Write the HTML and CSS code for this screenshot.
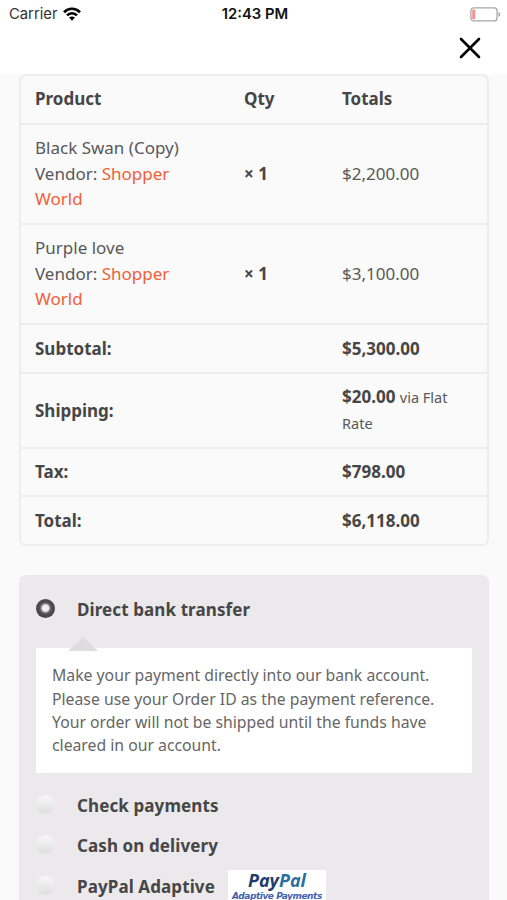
FILE: index.html
```html
<!DOCTYPE html>
<html lang="en">
<head>
<meta charset="utf-8">
<title>Checkout</title>
<link rel="stylesheet" href="styles.css">
</head>
<body>
<header class="top">
  <div class="status">
    <div class="carrier"><span>Carrier</span>
      <svg class="wifi" width="18" height="14" viewBox="0 0 18 14" fill="none" stroke="#000" stroke-width="2.7"><path d="M1 5.2C5.4.6 12.6.6 17 5.2"/><path d="M4 8.4c2.9-2.9 7.1-2.9 10 0"/><path d="M6.1 10.6c1.7-1.5 4.1-1.5 5.8 0L9 13.7z" fill="#000" stroke="none"/></svg>
    </div>
    <div class="clock">12:43 PM</div>
    <svg class="battery" width="31" height="15" viewBox="0 0 31 15"><rect x=".9" y=".9" width="26.2" height="13" rx="3" fill="#fff" stroke="#a8a8a8" stroke-width="1.3"/><rect x="2.2" y="2.6" width="3" height="9.6" rx="1" fill="#f58f91"/><path d="M28.5 5c2.4.8 2.4 4 0 4.8z" fill="#a8a8a8"/></svg>
  </div>
  <svg class="close" width="22" height="22" viewBox="0 0 22 22" stroke="#000" stroke-width="2.6" stroke-linecap="round"><path d="M2 2l18 18M20 2L2 20"/></svg>
</header>
<main>
  <section class="order">
    <div class="row head"><b>Product</b><b>Qty</b><b>Totals</b></div>
    <div class="row item"><div><div>Black Swan (Copy)</div><div>Vendor: <a>Shopper</a></div><div><a>World</a></div></div><b>× 1</b><span>$2,200.00</span></div>
    <div class="row item"><div><div>Purple love</div><div>Vendor: <a>Shopper</a></div><div><a>World</a></div></div><b>× 1</b><span>$3,100.00</span></div>
    <div class="row"><b>Subtotal:</b><b class="total">$5,300.00</b></div>
    <div class="row shipping"><b>Shipping:</b><div class="total"><div><b>$20.00</b> <small>via Flat</small></div><div><small>Rate</small></div></div></div>
    <div class="row tax"><b>Tax:</b><b class="total">$798.00</b></div>
    <div class="row last"><b>Total:</b><b class="total">$6,118.00</b></div>
  </section>
  <section class="payment">
    <div class="method first"><i class="radio on"></i><b>Direct bank transfer</b></div>
    <p class="note">Make your payment directly into our bank account. Please use your Order ID as the payment reference. Your order will not be shipped until the funds have cleared in our account.</p>
    <div class="method"><i class="radio"></i><b>Check payments</b></div>
    <div class="method"><i class="radio"></i><b>Cash on delivery</b></div>
    <div class="method"><i class="radio"></i><b>PayPal Adaptive</b>
      <div class="paypal"><div class="brand"><span>Pay</span><span class="pal">Pal</span></div><div class="sub">Adaptive Payments</div></div>
    </div>
  </section>
</main>
</body>
</html>
```
FILE: styles.css
```css
* { box-sizing: border-box; }
body { margin: 0; height: 900px; overflow: hidden; background: #fafafa; color: #585858; font: 17px/25.7px "Noto Sans", "Open Sans", sans-serif; }
b { color: #464646; font-weight: 700; }
a { color: #ee6139; }
.top { height: 74px; background: #fff; display: flex; flex-direction: column; }
.status { height: 27px; padding: 0 6px 0 9px; display: grid; grid-template-columns: 1fr auto 1fr; align-items: center; color: #333; font: 14.8px/27px Inter, sans-serif; }
.carrier { display: flex; align-items: center; gap: 5px; padding-top: 1px; }
.wifi { position: relative; top: -1px; }
.clock { font-weight: 600; color: #111; padding-top: 1px; }
.battery { justify-self: end; }
.close { align-self: flex-end; margin: 10px 26px 0 0; }
main { padding: 0 18px 0 19px; }
.order { border: 2px solid #ededed; border-radius: 7px; }
.row { display: grid; grid-template-columns: 209px 98px 1fr; align-items: center; height: 49px; padding: 0 14px; border-bottom: 2px solid #ededed; }
.row .total { grid-column: 3; }
.row.head { padding-bottom: 2px; }
.row.item { height: 100px; padding-bottom: 1px; }
.row.shipping { height: 75px; }
.row.tax { height: 48px; }
.row.last { height: 47px; border-bottom: 0; }
.shipping .total { padding-bottom: 2px; }
.shipping .total > div { height: 25.7px; white-space: nowrap; }
small { font-size: 14.5px; line-height: 20px; }
.payment { margin-top: 29px; height: 360px; padding: 14px 17px; border-radius: 7px; background: #ebe9eb; }
.method { display: flex; align-items: center; height: 40.4px; }
.method b { letter-spacing: .1px; }
.method.first b { padding-top: 1px; }
.radio { flex: none; width: 19px; height: 19px; margin-right: 22px; border-radius: 50%; background: linear-gradient(#f7f7f7, #dddfdd); position: relative; top: -1px; }
.radio.on { background: radial-gradient(circle at 50% 48%, #f0f0f0 0 3px, #777 4.8px, #505050 6px, #484548 9px); }
.note { position: relative; margin: 19px 0 12px; padding: 16px 15px 16px 16px; height: 125px; background: #fff; color: #666; font-size: 15.78px; line-height: 23.2px; }
.note::before { content: ""; position: absolute; left: 32px; top: -11px; border: 15px solid transparent; border-top: 0; border-bottom: 14px solid #dfdcdf; }
.paypal { align-self: flex-start; flex: none; width: 98px; height: 50px; margin: 4px 0 0 13px; background: #fff; text-align: center; white-space: nowrap; }
.brand { font: italic 700 18px/21px "Open Sans", sans-serif; color: #213c6d; }
.pal { color: #2b6f9f; }
.sub { color: #4263b0; font: italic 700 9px/11px "DejaVu Sans", sans-serif; letter-spacing: -.45px; }
```
